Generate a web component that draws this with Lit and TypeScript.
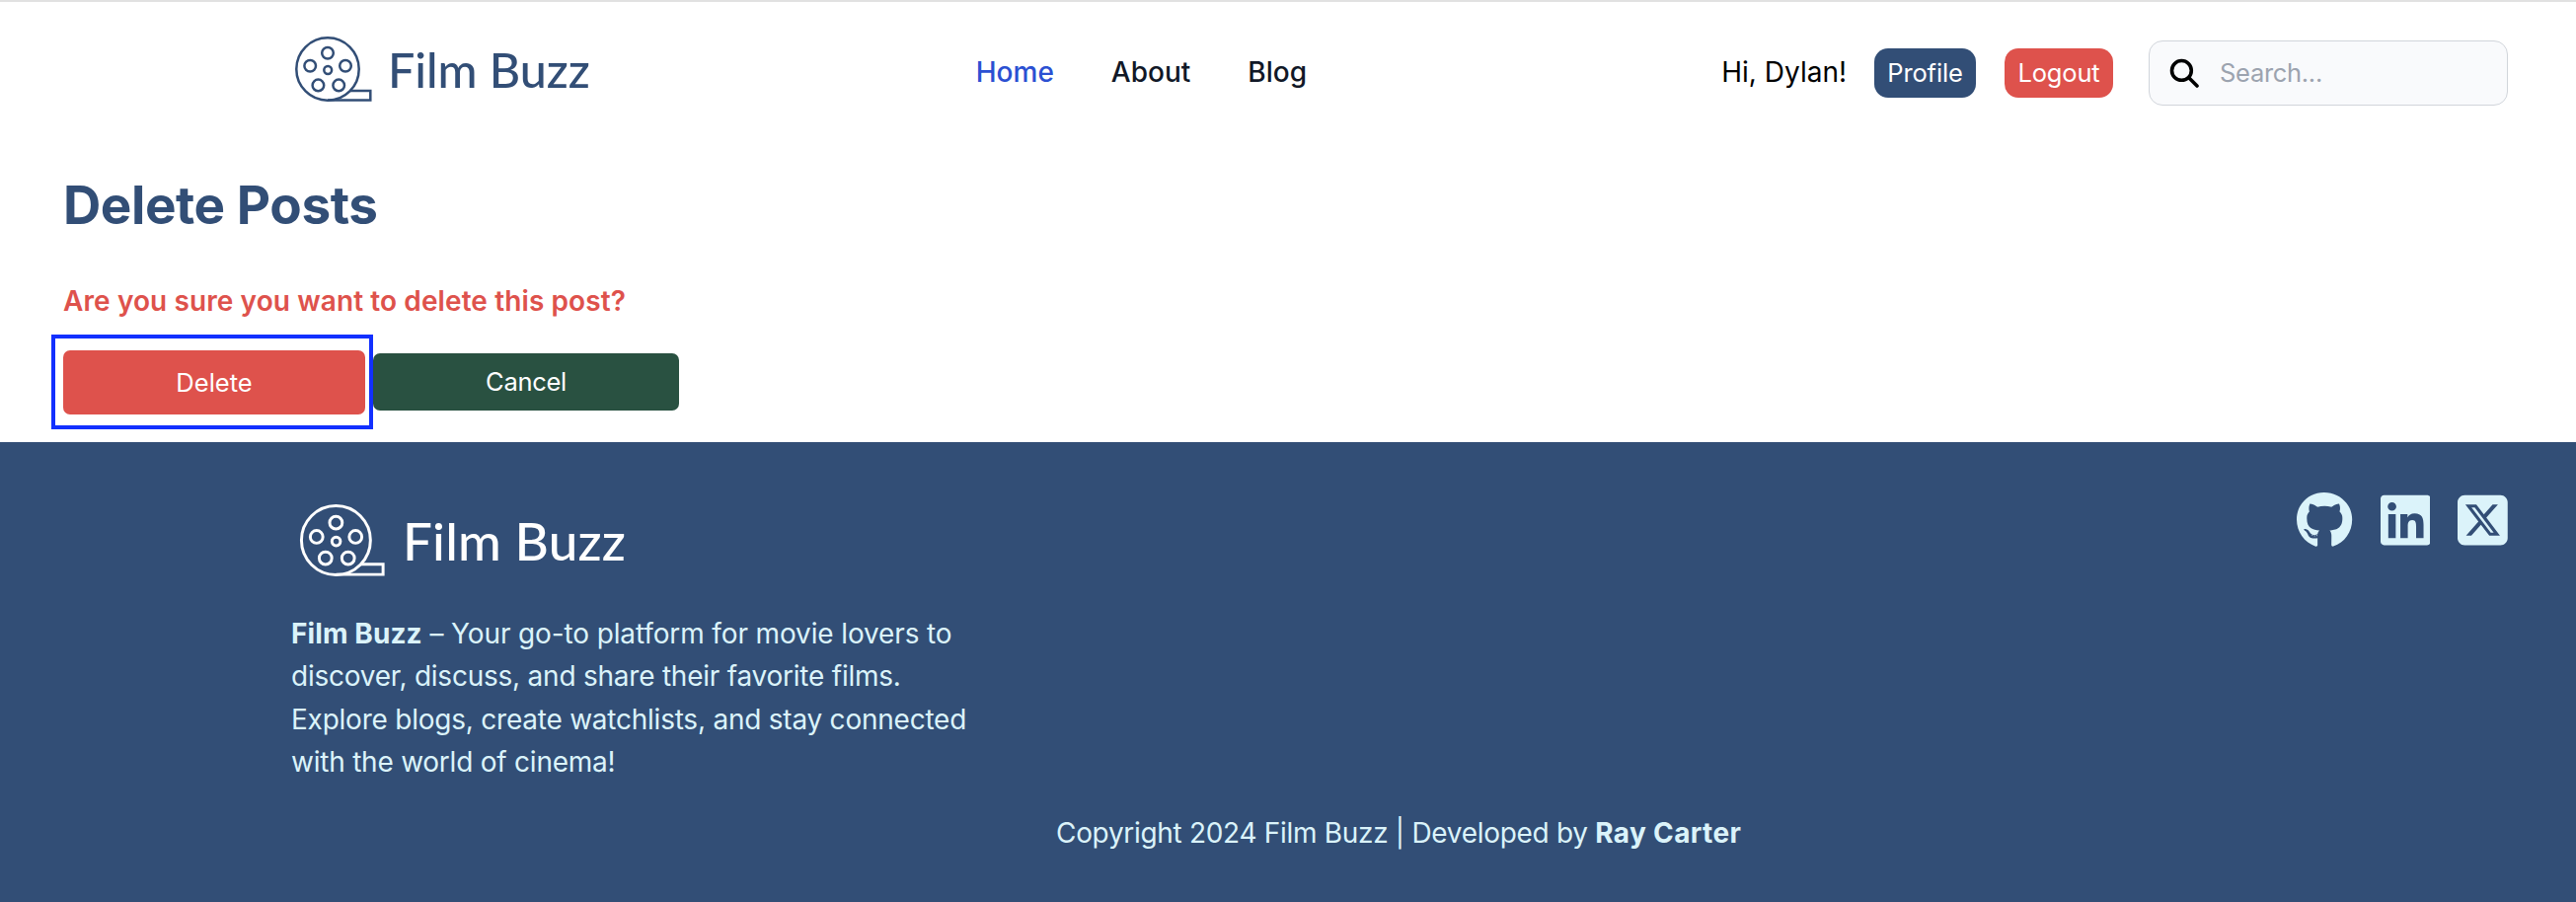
import { LitElement, html, css, svg } from "lit";
import { customElement } from "lit/decorators.js";

const reel = (label: string) => html`
  <svg class="reel" viewBox="0 0 78 66" fill="none" stroke="currentColor" aria-label=${label}>
    <circle cx="33" cy="33" r="31.7" />
    ${[[33, 16.8], [51, 29.8], [44.2, 49.4], [23.4, 49.4], [15.2, 29.8]].map(
      ([x, y]) => svg`<circle cx=${x} cy=${y} r="5.8" />`
    )}
    <circle cx="33.2" cy="34" r="3.9" />
    <path d="M55.500 54.900H76.300V64.400H33" />
  </svg>`;

@customElement("app-root")
export class AppRoot extends LitElement {
  static styles = css`
    :host { display: flex; flex-direction: column; min-height: 914px; background: #fff; color: #000;
      font-family: Inter, "Liberation Sans", sans-serif; font-size: 28px; line-height: 43.3px; overflow: hidden; }
    * { box-sizing: border-box; }
    a { color: inherit; text-decoration: none; }
    .t { display: inline-block; white-space: nowrap; }
    header, footer, main { flex: none; }
    header { border-top: 2px solid #e1e1e1; height: 146px; display: flex; align-items: center; padding: 0 69px 0 299px; }
    .logo { display: flex; align-items: flex-start; color: #324e76; margin-bottom: 8px; }
    .reel { width: 78px; height: 66px; display: block; overflow: visible; stroke-width: 2.5; }
    .word { font-family: Lato, sans-serif; font-size: 48.4px; line-height: 66px; font-weight: 500; margin-left: 16px; }
    nav { display: flex; gap: 58px; font-weight: 500; color: #111827; margin-left: 391px; }
    nav .on { color: #2b50d2; }
    .user { display: flex; align-items: center; margin-left: auto; }
    .pill { height: 50px; border-radius: 14px; color: #fff; font-size: 25.5px; display: flex; align-items: center; justify-content: center; letter-spacing: -0.15px; }
    .profile { width: 103px; background: #324e76; margin-left: 28px; }
    .logout { width: 110px; background: #de524c; margin-left: 29px; }
    .search { width: 364px; height: 66px; border: 1px solid #d1d5db; border-radius: 14px; background: #f9fafc; margin-left: 36px;
      display: flex; align-items: center; padding-left: 20px; color: #9ca3af; font-size: 25.5px; letter-spacing: -0.3px; }
    .search svg { width: 30px; height: 30px; color: #000; margin-right: 21px; }
    main { height: 302px; padding: 29px 64px 0; }
    h1 { margin: 0; font-size: 53px; line-height: 66px; font-weight: 700; color: #324e76; letter-spacing: -0.42px; }
    .ask { margin: 42px 0 0; font-weight: 600; color: #de524c; line-height: 44px; letter-spacing: 0.1px; }
    .actions { display: flex; align-items: center; margin: 12px 0 0 -12px; }
    .focus { border: 4px solid #1230ff; width: 326px; height: 96px; padding: 12px 4px 0 8px; }
    .btn { border-radius: 7px; color: #fff; font-size: 25.5px; display: flex; align-items: center; justify-content: center; }
    .delete { height: 65px; background: #de524c; }
    .cancel { width: 310px; height: 58px; background: #295141; letter-spacing: -0.3px; }
    footer { height: 466px; background: #324e76; color: #dbf3fa; padding: 50px 69px 0 295px; display: flex; flex-direction: column; }
    .top { display: flex; justify-content: space-between; align-items: flex-start; height: 289px; }
    .flogo { color: #fff; padding: 13px 0 0 9px; margin: 0; }
    .flogo .reel { width: 86px; height: 73px; stroke-width: 2.7; }
    .flogo .word { font-size: 53px; line-height: 73px; margin-left: 18px; letter-spacing: 0.2px; }
    .about { margin: 37px 0 0; letter-spacing: -0.23px; }
    .about .first { letter-spacing: -0.13px; }
    .about b { letter-spacing: 0.1px; }
    .line { display: block; white-space: nowrap; }
    .social { display: flex; gap: 28px; }
    .social svg { height: 58px; display: block; fill: currentColor; }
    .copy { margin: 36px 0 0 775px; letter-spacing: -0.31px; }
    .copy b { letter-spacing: 0.35px; }
  `;

  render() {
    return html`
      <header>
        <a class="logo">${reel("Film Buzz")}<span class="word t">Film Buzz</span></a>
        <nav><a class="on t">Home</a><a class="t">About</a><a class="t">Blog</a></nav>
        <div class="user">
          <span class="t">Hi, Dylan!</span>
          <a class="pill profile"><span class="t">Profile</span></a>
          <a class="pill logout"><span class="t">Logout</span></a>
          <div class="search">
            <svg viewBox="0 0 30 30" fill="none" stroke="currentColor" stroke-width="3.6" stroke-linecap="round">
              <circle cx="12.4" cy="12.4" r="9.9" /><path d="M20 20L28 28" />
            </svg>
            <span class="t">Search...</span>
          </div>
        </div>
      </header>
      <main>
        <h1><span class="t">Delete Posts</span></h1>
        <p class="ask"><span class="t">Are you sure you want to delete this post?</span></p>
        <div class="actions">
          <div class="focus"><a class="btn delete"><span class="t">Delete</span></a></div>
          <a class="btn cancel"><span class="t">Cancel</span></a>
        </div>
      </main>
      <footer>
        <div class="top">
          <div>
            <a class="logo flogo">${reel("Film Buzz")}<span class="word t">Film Buzz</span></a>
            <p class="about">
              <span class="line first"><b class="t">Film Buzz</b> <span class="t">– Your go-to platform for movie lovers to</span></span>
              <span class="line">discover, discuss, and share their favorite films.</span>
              <span class="line">Explore blogs, create watchlists, and stay connected</span>
              <span class="line">with the world of cinema!</span>
            </p>
          </div>
          <div class="social">
            <svg viewBox="0 0 496 512"><path d="M165.900 397.400c0 2-2.300 3.600-5.200 3.600-3.300.3-5.600-1.300-5.600-3.600 0-2 2.300-3.600 5.200-3.600 3-.3 5.600 1.300 5.600 3.600zm-31.100-4.500c-.7 2 1.300 4.300 4.300 4.900 2.600 1 5.600 0 6.200-2s-1.300-4.300-4.300-5.200c-2.600-.7-5.500.3-6.200 2.300zm44.200-1.700c-2.900.7-4.900 2.600-4.600 4.900.3 2 2.900 3.300 5.900 2.600 2.900-.7 4.900-2.600 4.600-4.600-.3-1.900-3-3.200-5.900-2.900zM244.800 8C106.100 8 0 113.300 0 252c0 110.900 69.800 205.800 169.500 239.200 12.800 2.300 17.300-5.600 17.300-12.100 0-6.200-.3-40.400-.3-61.400 0 0-70 15-84.700-29.800 0 0-11.400-29.100-27.800-36.600 0 0-22.900-15.700 1.600-15.400 0 0 24.900 2 38.600 25.800 21.900 38.600 58.600 27.500 72.900 20.900 2.300-16 8.800-27.100 16-33.700-55.900-6.200-112.300-14.300-112.300-110.500 0-27.500 7.600-41.300 23.600-58.900-2.600-6.500-11.100-33.300 2.600-67.900 20.900-6.500 69 27 69 27 20-5.600 41.500-8.500 62.800-8.500s42.800 2.900 62.800 8.500c0 0 48.100-33.600 69-27 13.700 34.700 5.200 61.400 2.600 67.900 16 17.700 25.800 31.500 25.800 58.900 0 96.500-58.900 104.200-114.800 110.500 9.200 7.900 17 22.900 17 46.400 0 33.700-.3 75.400-.3 83.600 0 6.500 4.600 14.400 17.300 12.100C428.200 457.800 496 362.900 496 252 496 113.300 383.500 8 244.800 8z"/></svg>
            <svg viewBox="0 0 448 512"><path d="M416 32H31.900C14.300 32 0 46.500 0 64.300v383.400C0 465.500 14.300 480 31.900 480H416c17.600 0 32-14.500 32-32.300V64.300c0-17.800-14.400-32.300-32-32.300zM135.400 416H69V202.200h66.500V416zm-33.200-243c-21.300 0-38.500-17.300-38.500-38.500S80.900 96 102.200 96c21.200 0 38.500 17.300 38.500 38.500 0 21.300-17.200 38.500-38.500 38.500zm282.100 243h-66.400V312c0-24.800-.5-56.700-34.500-56.700-34.600 0-39.900 27-39.900 54.900V416h-66.400V202.200h63.700v29.200h.9c8.900-16.800 30.600-34.500 62.900-34.500 67.200 0 79.700 44.300 79.700 101.900V416z"/></svg>
            <svg viewBox="0 0 448 512"><path d="M64 32C28.700 32 0 60.700 0 96V416c0 35.300 28.700 64 64 64H384c35.300 0 64-28.700 64-64V96c0-35.300-28.700-64-64-64H64zm297.100 84L257.300 234.600 379.400 396H283.800L209 298.100 123.300 396H75.800l111-126.900L69.700 116h98l67.700 89.500L313.600 116h47.500zM323.300 367.600L153.400 142.900H125.100L296.900 367.600h26.300z"/></svg>
          </div>
        </div>
        <p class="copy"><span class="t">Copyright 2024 Film Buzz | Developed by</span> <b class="t">Ray Carter</b></p>
      </footer>`;
  }
}
